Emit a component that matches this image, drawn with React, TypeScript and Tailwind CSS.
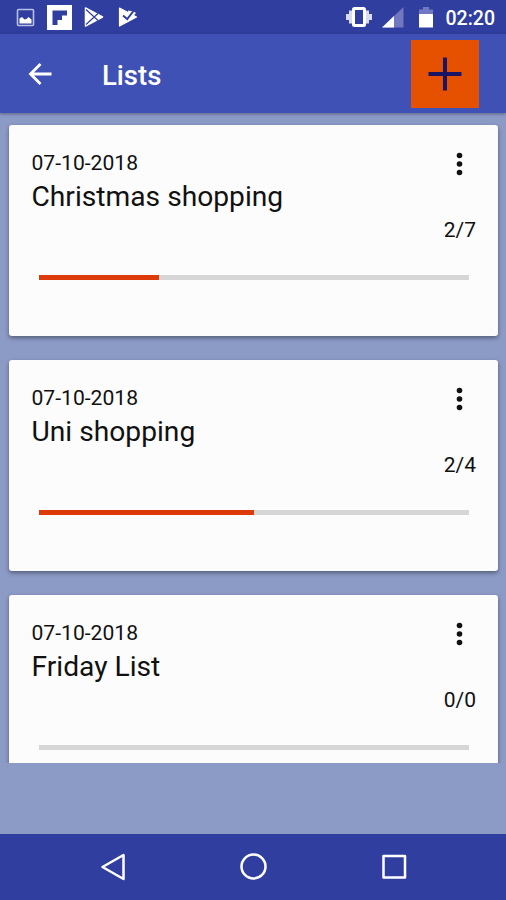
type ShoppingList = {
  date: string;
  name: string;
  done: number;
  total: number;
};

const lists: ShoppingList[] = [
  { date: "07-10-2018", name: "Christmas shopping", done: 2, total: 7 },
  { date: "07-10-2018", name: "Uni shopping", done: 2, total: 4 },
  { date: "07-10-2018", name: "Friday List", done: 0, total: 0 },
];

function StatusBar() {
  return (
    <div className="flex h-[34px] shrink-0 items-center justify-between bg-[#303f9f] pl-4 pr-[11px] text-white">
      <div className="flex items-center">
        {/* Screenshot */}
        <svg width="19" height="19" viewBox="0 0 19 19">
          <rect x="1.500" y="1.500" width="16" height="16" rx="1" fill="none" stroke="#b9bfe4" strokeWidth="1.600" />
          <path d="M3.500 15.500v-5l2.500-1.500 2.500 2.500 2-.5 2-2 3 2.500v4z" fill="#fff" />
        </svg>
        {/* Flipboard */}
        <svg width="25" height="25" viewBox="0 0 25 25" className="ml-3">
          <rect width="25" height="25" fill="#fff" />
          <path d="M5.500 5.500h14.500v5h-5v4.500h-4.500v5h-5z" fill="#303f9f" />
        </svg>
        {/* Play Store */}
        <svg width="20" height="20" viewBox="0 0 20 20" className="ml-[12px]">
          <path d="M1.500 1 18.500 10 1.500 19z" fill="#fff" stroke="#fff" strokeWidth="1.500" strokeLinejoin="round" />
          <path d="M2 2.500 14 13.500M2 17.500 14 6.500" stroke="#303f9f" strokeWidth="1.200" />
        </svg>
        {/* Play Protect */}
        <svg width="20" height="20" viewBox="0 0 20 20" className="ml-[14px]">
          <path d="M1.500 1 18.500 10 1.500 19z" fill="#fff" stroke="#fff" strokeWidth="1.200" strokeLinejoin="round" />
          <path d="M10 3.500 15.500 4.500 18 6 11.500 13z" fill="#fff" />
          <path d="M5 8.500 9.200 12 15.500 4" fill="none" stroke="#303f9f" strokeWidth="2" />
        </svg>
      </div>
      <div className="flex items-center">
        {/* Vibrate */}
        <svg width="28" height="22" viewBox="0 0 28 22" fill="#d9dcf1">
          <path d="M4 4.500h3.500v13H4zM20.500 4.500H24v13h-3.500zM1 8h3v6H1zM24 8h3v6h-3z" />
          <rect x="8.500" y="2.500" width="11" height="17" rx="1" fill="#303f9f" stroke="#fff" strokeWidth="3" />
        </svg>
        <svg width="22" height="21" viewBox="0 0 22 21" className="ml-[9px]">
          <path d="M21.500 0v20.500H0z" fill="#7079bf" />
          <path d="M12 9v11.500H0z" fill="#fff" />
        </svg>
        <svg width="14" height="21" viewBox="0 0 14 21" className="ml-[15px]">
          <path d="M4 0h6v2.500h4V8H0V2.500h4z" fill="#7079bf" />
          <path d="M0 7h14v13.500H0z" fill="#fff" />
        </svg>
        <span className="ml-[13px] mt-[3px] text-[19.500px] font-medium leading-none">02:20</span>
      </div>
    </div>
  );
}

function AppBar() {
  return (
    <header className="z-10 flex h-[79px] shrink-0 items-center bg-[#3f51b5] pl-7 pr-[27px] shadow-[0_1px_3px_rgba(0,0,0,0.35)]">
      <button aria-label="Back">
        <svg width="24" height="24" viewBox="0 0 24 24" fill="none" stroke="#fff" strokeWidth="2.800">
          <path d="M23.500 12H3M12.500 2 2.500 12l10 10" />
        </svg>
      </button>
      <h1 className="ml-[50px] mt-[5px] text-[27.500px] font-medium leading-none text-white">Lists</h1>
      <button aria-label="Add list" className="ml-auto flex size-[68px] items-center justify-center bg-[#e65100]">
        <svg width="34" height="34" viewBox="0 0 34 34" stroke="#1a1464" strokeWidth="4">
          <path d="M17 .5v33M.5 17h33" />
        </svg>
      </button>
    </header>
  );
}

function ListCard({ list }: { list: ShoppingList }) {
  // whole percents only, rounded down
  const percent = list.total ? Math.floor((list.done / list.total) * 100) : 0;

  return (
    <article className="h-[211px] shrink-0 rounded-[3px] bg-[#fcfcfc] pl-[22.500px] pr-[22px] pt-[26px] text-[#111] shadow-[0_2px_4px_rgba(0,0,0,0.4)]">
      <div className="flex h-[67px] justify-between">
        <div>
          <p className="text-[21.100px] leading-6">{list.date}</p>
          <h2 className="text-[28.200px] leading-[44px]">{list.name}</h2>
        </div>
        <button aria-label="More" className="mr-[13.500px] mt-[1px] h-6">
          <svg width="7" height="24" viewBox="0 0 7 24" fill="#111">
            <circle cx="3.500" cy="3.500" r="2.800" />
            <circle cx="3.500" cy="12" r="2.800" />
            <circle cx="3.500" cy="20.500" r="2.800" />
          </svg>
        </button>
      </div>
      <p className="text-right text-[21px] leading-6">
        {list.done}/{list.total}
      </p>
      <div className="ml-[7.500px] mr-[7px] mt-[33px] h-[5px] bg-[#d6d6d6]">
        <div className="h-full bg-[#dd3a0a]" style={{ width: `${percent}%` }} />
      </div>
    </article>
  );
}

function NavBar() {
  return (
    <nav className="flex h-[66px] shrink-0 items-center justify-between bg-[#303f9f] pl-[100px] pr-[98px]">
      <svg width="27" height="28" viewBox="0 0 27 28" fill="none" stroke="#fff" strokeWidth="2.500" strokeLinejoin="round">
        <path d="M23.500 2v24L2.500 14z" />
      </svg>
      <svg width="28" height="28" viewBox="0 0 28 28" fill="none" stroke="#fff" strokeWidth="2.500">
        <circle cx="13.500" cy="13.500" r="12" />
      </svg>
      <svg width="28" height="28" viewBox="0 0 28 28" fill="none" stroke="#fff" strokeWidth="2.500" strokeLinejoin="round">
        <rect x="3.500" y="3" width="21.500" height="21.500" />
      </svg>
    </nav>
  );
}

function App() {
  return (
    <div className="flex h-[900px] w-[506px] flex-col overflow-hidden bg-[#8c9ac6] font-[Roboto,sans-serif]">
      <StatusBar />
      <AppBar />
      {/* The third card is cut off by the bottom of the list */}
      <main className="flex h-[650px] shrink-0 flex-col gap-6 overflow-hidden pl-[9px] pr-2 pt-3">
        {lists.map((list) => (
          <ListCard key={list.name} list={list} />
        ))}
      </main>
      <div className="flex-1" />
      <NavBar />
    </div>
  );
}

export default App;
